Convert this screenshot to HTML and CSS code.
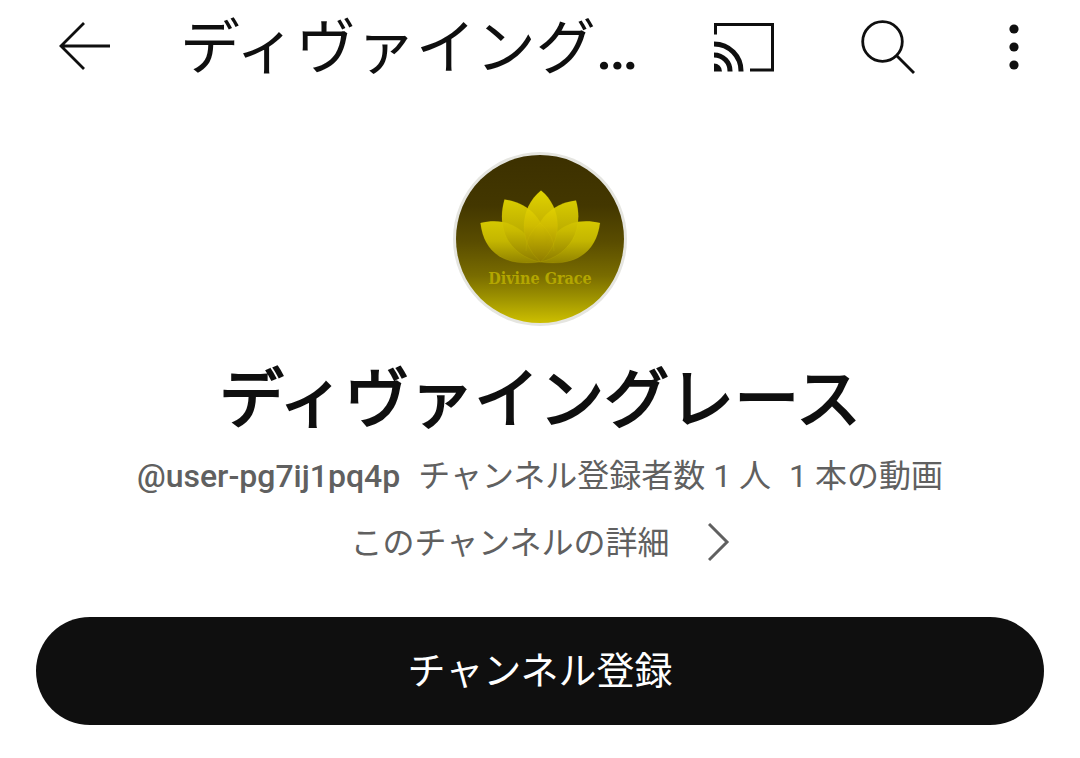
FILE: index.html
```html
<!DOCTYPE html>
<html lang="ja">
<head>
<meta charset="utf-8">
<meta name="viewport" content="width=device-width, initial-scale=1">
<title>ディヴァイングレース</title>
<link rel="stylesheet" href="styles.css">
</head>
<body>
<header class="topbar">
  <button class="icon-button" type="button" aria-label="戻る">
    <svg width="52" height="50" viewBox="0 0 52 50" fill="none" stroke="currentColor" stroke-width="2.800"><path d="M26 1 3 24l23 23M3 24h50"/></svg>
  </button>
  <div class="topbar-title">ディヴァイング<span class="ellipsis">…</span></div>
  <button class="icon-button" type="button" aria-label="キャスト">
    <svg width="60" height="50" viewBox="0 0 60 50" fill="none" stroke="currentColor"><path stroke-width="3" d="M1.5 12.500V2.500h57v45.500H36"/><path stroke-width="5" d="M0 22a27 27 0 0 1 27 27.500M0 33a16 16 0 0 1 16 16.500"/><path fill="currentColor" stroke="none" d="M0 41.500a8 8 0 0 1 8 8H0z"/></svg>
  </button>
  <button class="icon-button" type="button" aria-label="検索">
    <svg width="54" height="54" viewBox="0 0 54 54" fill="none" stroke="currentColor" stroke-width="2.800"><circle cx="21.500" cy="21.500" r="19.800"/><path d="m35 35 18 18"/></svg>
  </button>
  <button class="icon-button icon-button-narrow" type="button" aria-label="その他">
    <svg width="10" height="46" viewBox="0 0 10 46" fill="currentColor"><circle cx="5" cy="5" r="4.600"/><circle cx="5" cy="23" r="4.600"/><circle cx="5" cy="41" r="4.600"/></svg>
  </button>
</header>
<main class="channel">
  <svg class="avatar" width="174" height="174" viewBox="0 0 174 174" role="img" aria-label="Divine Grace">
    <defs>
      <linearGradient id="sky" x1="0" y1="0" x2="0" y2="1">
        <stop offset="0" stop-color="#3c3000"/><stop offset=".3" stop-color="#433700"/><stop offset=".52" stop-color="#5a4d00"/><stop offset=".72" stop-color="#796c00"/><stop offset=".86" stop-color="#a09500"/><stop offset="1" stop-color="#cdbf00"/>
      </linearGradient>
      <linearGradient id="outer" gradientUnits="userSpaceOnUse" x1="0" y1="68" x2="0" y2="110">
        <stop offset="0" stop-color="#d6c900"/><stop offset=".5" stop-color="#c4b600"/><stop offset="1" stop-color="#938500"/>
      </linearGradient>
      <linearGradient id="inner" gradientUnits="userSpaceOnUse" x1="0" y1="47" x2="0" y2="110">
        <stop offset="0" stop-color="#eadd00"/><stop offset=".5" stop-color="#c8b900"/><stop offset="1" stop-color="#8c7b00"/>
      </linearGradient>
      <linearGradient id="center" gradientUnits="userSpaceOnUse" x1="0" y1="38" x2="0" y2="110">
        <stop offset="0" stop-color="#f2e500"/><stop offset=".5" stop-color="#d0bc00"/><stop offset="1" stop-color="#8f7c00"/>
      </linearGradient>
    </defs>
    <circle cx="87" cy="87" r="87" fill="#e5e5e0"/>
    <circle cx="87" cy="87" r="84" fill="url(#sky)"/>
    <g stroke="#e3d400" stroke-opacity=".2" stroke-width=".6">
      <path fill="url(#outer)" d="M27.500 71C58 64 79 80 87 110C52 115 31 101 27.500 71z"/>
      <path fill="url(#outer)" d="M147 71C116 64 95 80 87 110C122 115 143 101 147 71z"/>
      <path fill="url(#inner)" fill-opacity=".9" d="M51.500 47.500C83 51 103 83 87 110C56 103 43 77 51.500 47.500z"/>
      <path fill="url(#inner)" fill-opacity=".9" d="M123 48.500C91 52 71 83 87 110C118 103 131 77 123 48.500z"/>
      <path fill="url(#center)" fill-opacity=".9" d="M88 38.500C67 55 64 89 87.500 110C111 89 109 55 88 38.500z"/>
      <path fill="none" d="M87 71Q72 84 73 99M87 71Q102 84 101 99"/>
    </g>
    <text class="avatar-text" x="87" y="132" text-anchor="middle">Divine Grace</text>
  </svg>
  <h1 class="channel-name">ディヴァイングレース</h1>
  <div class="meta">
    <span class="handle">@user-pg7ij1pq4p</span>
    <span>チャンネル登録者数 1 人</span>
    <span>1 本の動画</span>
  </div>
  <a class="details" href="#about">このチャンネルの詳細
    <svg width="22" height="40" viewBox="0 0 22 40" fill="none" stroke="currentColor" stroke-width="3"><path d="m1 1 18 18L1 37"/></svg>
  </a>
  <button class="subscribe" type="button">チャンネル登録</button>
</main>
</body>
</html>
```
FILE: styles.css
```css
* {
  box-sizing: border-box;
}

body {
  margin: 0;
  background: #fff;
  color: #0f0f0f;
  font-family: Roboto, "Noto Sans CJK JP", sans-serif;
}

button {
  border: 0;
  padding: 0;
  background: none;
  color: inherit;
  font: inherit;
  cursor: pointer;
}

.topbar {
  display: flex;
  align-items: center;
  gap: 48px;
  height: 94px;
  padding: 0 36px;
}

.icon-button {
  flex: none;
  display: flex;
  align-items: center;
  justify-content: center;
  width: 96px;
  height: 92px;
}

.icon-button-narrow {
  width: 60px;
}

.topbar-title {
  flex: 1;
  min-width: 0;
  padding-top: 4px;
  white-space: nowrap;
  font-size: 60px;
  line-height: 92px;
}

.ellipsis {
  font-weight: 500;
}

.channel {
  display: flex;
  flex-direction: column;
  align-items: center;
  padding: 58px 36px 32px;
}

.avatar {
  display: block;
}

.avatar-text {
  fill: #b3a600;
  font-family: "DejaVu Serif Condensed", "DejaVu Serif", serif;
  font-size: 16px;
  font-weight: 700;
}

.channel-name {
  margin: 26px 0 0;
  font-size: 65px;
  font-weight: 400;
  line-height: 96px;
  -webkit-text-stroke: 2px;
}

.meta {
  display: flex;
  justify-content: center;
  gap: 18px;
  margin-top: 4px;
  color: #606060;
  font-size: 32px;
  line-height: 48px;
  white-space: nowrap;
}

.handle {
  font-weight: 500;
}

.details {
  display: flex;
  align-items: center;
  gap: 38px;
  margin-top: 19px;
  color: #606060;
  font-size: 32px;
  line-height: 48px;
  text-decoration: none;
}

.subscribe {
  width: 100%;
  height: 108px;
  margin-top: 50px;
  padding-bottom: 7px;
  border-radius: 54px;
  background: #0f0f0f;
  color: #fff;
  font-size: 38px;
}
```
